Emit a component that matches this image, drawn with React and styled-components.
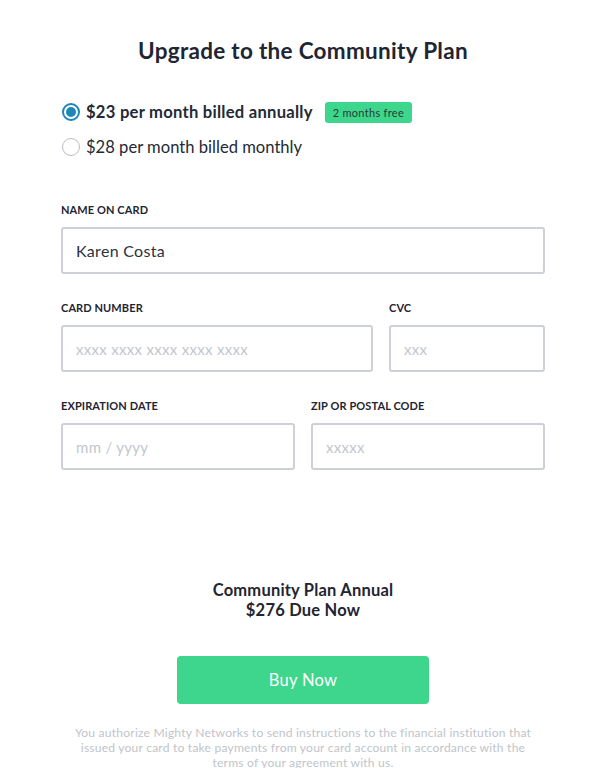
import React from "react";
import styled, { createGlobalStyle } from "styled-components";

const Global = createGlobalStyle`
  html, body { margin: 0; padding: 0; background: #ffffff; }
  body { font-family: Lato, "Noto Sans", sans-serif; color: #1f2532; }
  * { box-sizing: border-box; }
`;

const Page = styled.main`
  padding: 37px 63px 0 61px;
  display: flex;
  flex-direction: column;
`;

const Title = styled.h1`
  margin: 0;
  text-align: center;
  font-size: 22.5px;
  line-height: 28px;
  font-weight: 700;
  color: #1f2532;
  letter-spacing: 0.3px;
`;

const Options = styled.div`
  margin-top: 35px;
  display: flex;
  flex-direction: column;
  gap: 11px;
`;

const Option = styled.label`
  display: flex;
  align-items: center;
  gap: 6px;
  height: 24px;
  margin-left: 1px;
  font-size: 16.6px;
  font-weight: ${(p) => (p.$selected ? 700 : 400)};
  color: #232a36;
  letter-spacing: ${(p) => (p.$selected ? "0.25px" : "0")};
`;

const Radio = styled.span`
  width: 18px;
  height: 18px;
  border-radius: 50%;
  flex: none;
  border: ${(p) => (p.$selected ? "2px solid #1d86ba" : "1.5px solid #b8bdc5")};
  display: flex;
  align-items: center;
  justify-content: center;
  &::after {
    content: "";
    display: ${(p) => (p.$selected ? "block" : "none")};
    width: 10px;
    height: 10px;
    border-radius: 50%;
    background: #1d86ba;
  }
`;

const Badge = styled.span`
  margin-left: 6px;
  background: #3dd68c;
  color: #2a3a35;
  font-size: 11px;
  font-weight: 400;
  line-height: 21px;
  padding: 0 8px;
  border-radius: 3px;
  letter-spacing: 0.3px;
`;

const Form = styled.div`
  margin-top: 44px;
  display: flex;
  flex-direction: column;
  gap: 27px;
`;

const Row = styled.div`
  display: grid;
  grid-template-columns: ${(p) => p.$cols || "1fr"};
  gap: 16px;
`;

const Field = styled.div`
  display: flex;
  flex-direction: column;
`;

const Label = styled.div`
  font-size: 11px;
  font-weight: 700;
  line-height: 14px;
  margin-bottom: 10px;
  color: #1f2532;
  letter-spacing: 0.1px;
`;

const Input = styled.div`
  height: 47px;
  border: 2px solid #cdd1d7;
  border-radius: 3px;
  padding: 0 13px;
  display: flex;
  align-items: center;
  color: ${(p) => (p.$placeholder ? "#c3c7ce" : "#2b3240")};
  font-size: ${(p) => (p.$placeholder ? "15px" : "16px")};
  letter-spacing: 0.3px;
`;

const Summary = styled.div`
  margin-top: 110px;
  text-align: center;
  font-size: 16.5px;
  font-weight: 700;
  line-height: 20px;
  color: #1f2532;
  letter-spacing: 0.2px;
`;

const BuyButton = styled.button`
  align-self: center;
  margin-top: 36px;
  width: 252px;
  height: 48px;
  border: none;
  border-radius: 4px;
  background: #3dd68c;
  color: #ffffff;
  font-family: inherit;
  font-size: 16.5px;
  font-weight: 400;
  letter-spacing: 0.3px;
`;

const Disclaimer = styled.p`
  margin: 21px -20px 0;
  text-align: center;
  font-size: 12.1px;
  line-height: 15px;
  color: #c0c4ca;
  letter-spacing: 0.2px;
`;

export default function App() {
  return (
    <>
      <Global />
      <Page>
        <Title>Upgrade to the Community Plan</Title>
        <Options>
          <Option $selected>
            <Radio $selected />
            $23 per month billed annually
            <Badge>2 months free</Badge>
          </Option>
          <Option>
            <Radio />
            $28 per month billed monthly
          </Option>
        </Options>
        <Form>
          <Row>
            <Field>
              <Label>NAME ON CARD</Label>
              <Input>Karen Costa</Input>
            </Field>
          </Row>
          <Row $cols="2fr 1fr">
            <Field>
              <Label>CARD NUMBER</Label>
              <Input $placeholder>xxxx xxxx xxxx xxxx xxxx</Input>
            </Field>
            <Field>
              <Label>CVC</Label>
              <Input $placeholder>xxx</Input>
            </Field>
          </Row>
          <Row $cols="1fr 1fr">
            <Field>
              <Label>EXPIRATION DATE</Label>
              <Input $placeholder>mm / yyyy</Input>
            </Field>
            <Field>
              <Label>ZIP OR POSTAL CODE</Label>
              <Input $placeholder>xxxxx</Input>
            </Field>
          </Row>
        </Form>
        <Summary>
          Community Plan Annual
          <br />
          $276 Due Now
        </Summary>
        <BuyButton>Buy Now</BuyButton>
        <Disclaimer>
          You authorize Mighty Networks to send instructions to the financial institution that
          <br />
          issued your card to take payments from your card account in accordance with the
          <br />
          terms of your agreement with us.
        </Disclaimer>
      </Page>
    </>
  );
}
